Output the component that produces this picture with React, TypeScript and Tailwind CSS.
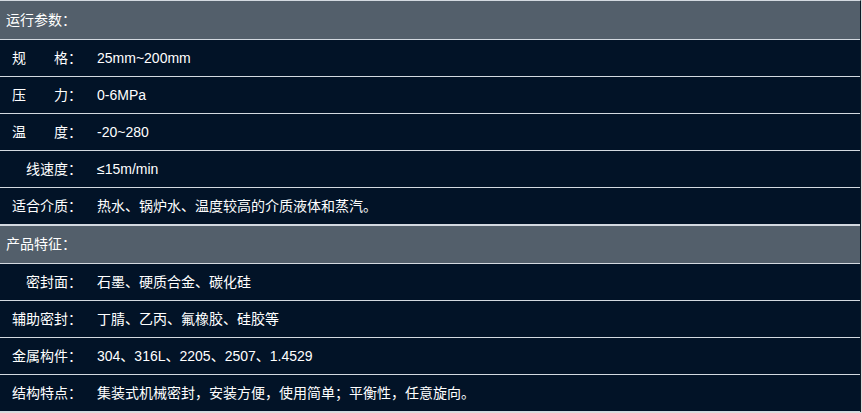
const font = {
  fontFamily:
    '"Liberation Sans", Arial, "Noto Sans CJK SC", sans-serif',
};

type Row = { label: string; value: string };

const params: Row[] = [
  { label: "规　　格：", value: "25mm~200mm" },
  { label: "压　　力：", value: "0-6MPa" },
  { label: "温　　度：", value: "-20~280" },
  { label: "线速度：", value: "≤15m/min" },
  { label: "适合介质：", value: "热水、锅炉水、温度较高的介质液体和蒸汽。" },
];

const features: Row[] = [
  { label: "密封面：", value: "石墨、硬质合金、碳化硅" },
  { label: "辅助密封：", value: "丁腈、乙丙、氟橡胶、硅胶等" },
  { label: "金属构件：", value: "304、316L、2205、2507、1.4529" },
  { label: "结构特点：", value: "集装式机械密封，安装方便，使用简单；平衡性，任意旋向。" },
];

const Header = ({ title, className }: { title: string; className: string }) => (
  <div
    className={`flex items-center pl-[6px] bg-[#535f6b] border-b border-[#d3d9e0] text-[14px] text-white ${className}`}
  >
    {title}
  </div>
);

const ParamRow = ({ label, value }: Row) => (
  <div className="h-[37px] flex items-center bg-[#021327] border-b border-[#d3d9e0] text-[14px] text-white">
    <div className="w-[82px] text-right whitespace-pre">{label}</div>
    <div className="ml-[15px]">{value}</div>
  </div>
);

const App = () => {
  return (
    <div className="w-[862px] h-[413px] bg-[#dcdcdc]" style={font}>
      <div className="w-[861px] flex flex-col border-t border-[#d3d9e0] border-r border-r-[#0e1a26]">
        {/* 运行参数 */}
        <Header title="运行参数：" className="h-[39px]" />
        {params.map((r) => (
          <ParamRow key={r.label} {...r} />
        ))}

        {/* 产品特征 */}
        <div className="h-[1px] bg-[#d3d9e0]" />
        <Header title="产品特征：" className="h-[38px]" />
        {features.map((r) => (
          <ParamRow key={r.label} {...r} />
        ))}
      </div>
    </div>
  );
};

export default App;
